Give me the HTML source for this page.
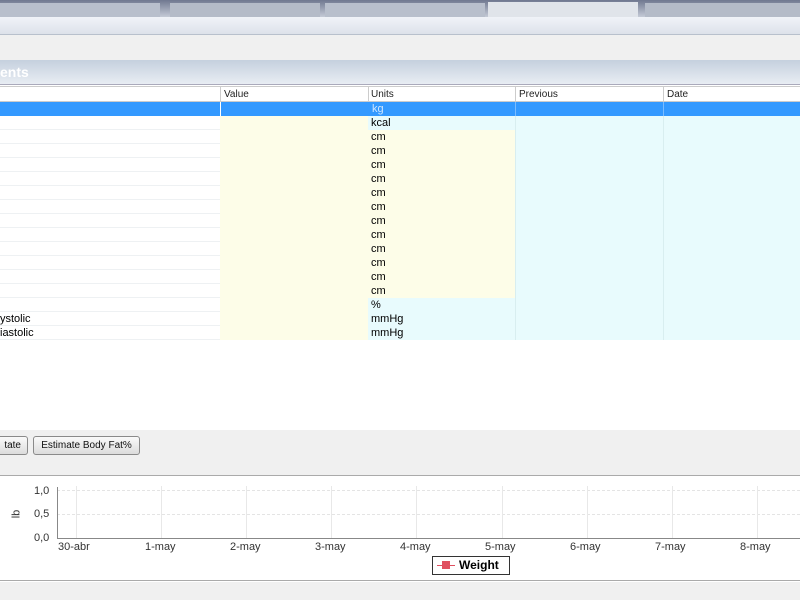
<!DOCTYPE html>
<html><head><style>
*{margin:0;padding:0;box-sizing:border-box}
body{width:800px;height:600px;overflow:hidden;background:#fff;font-family:"Liberation Sans",sans-serif;position:relative}
.a{position:absolute}
.row{position:absolute;left:0;width:800px;height:14px;border-bottom:1px solid #eef1f3;font-size:11px;line-height:14px}
.c{position:absolute;top:0;height:14px;padding-left:3px}
.hdr{font-family:"Liberation Sans Narrow","Liberation Sans",sans-serif;font-size:10px;color:#222}
.btn{position:absolute;top:436px;height:19px;border:1px solid #8a8a8a;border-radius:3px;background:linear-gradient(#fafafa,#dcdcdc);font-family:"Liberation Sans Narrow","Liberation Sans",sans-serif;font-size:10px;line-height:17px;padding:0 6px;color:#111;white-space:nowrap}
.xl{position:absolute;top:541px;font-size:11px;color:#333}
.vg{position:absolute;top:486px;width:1px;height:52px;background:#e8e8e8}
</style></head><body>
<div class="a" style="left:0;top:0;width:800px;height:17px;background:linear-gradient(#6f7890,#c4cad6)"></div>
<div class="a" style="left:0;top:3px;width:160px;height:14px;background:#b8bfcc"></div>
<div class="a" style="left:170px;top:3px;width:150px;height:14px;background:#b4bbc8"></div>
<div class="a" style="left:325px;top:3px;width:160px;height:14px;background:#b8bfcc"></div>
<div class="a" style="left:488px;top:2px;width:150px;height:15px;background:#e0e4ea"></div>
<div class="a" style="left:645px;top:3px;width:155px;height:14px;background:#b4bbc8"></div>
<div class="a" style="left:0;top:17px;width:800px;height:18px;background:linear-gradient(#f0f3f8,#dde2ea);border-bottom:1px solid #b8c0cc"></div>
<div class="a" style="left:0;top:35px;width:800px;height:25px;background:#f0f0f0"></div>
<div class="a" style="left:0;top:60px;width:800px;height:25px;background:linear-gradient(#c5d0de,#e8edf3);color:#fff;font-weight:bold;font-size:14px;line-height:24px;border-bottom:1px solid #aab">ents</div>
<div class="a" style="left:0;top:86px;width:800px;height:16px;background:#fff;border-bottom:1px solid #ccc;border-top:1px solid #ccc"></div>
<div class="a hdr" style="left:224px;top:89px">Value</div>
<div class="a hdr" style="left:371px;top:89px">Units</div>
<div class="a hdr" style="left:519px;top:89px">Previous</div>
<div class="a hdr" style="left:667px;top:89px">Date</div>
<div class="a" style="left:220px;top:86px;width:1px;height:16px;background:#ccc"></div>
<div class="a" style="left:368px;top:86px;width:1px;height:16px;background:#ccc"></div>
<div class="a" style="left:515px;top:86px;width:1px;height:16px;background:#ccc"></div>
<div class="a" style="left:663px;top:86px;width:1px;height:16px;background:#ccc"></div>
<div id="rows"></div>
<script>
var u=["kg","kcal","cm","cm","cm","cm","cm","cm","cm","cm","cm","cm","cm","cm","%","mmHg","mmHg"];
var n={15:"ystolic",16:"iastolic"};var h="";
for(var i=0;i<u.length;i++){var y=102+i*14;var sel=i==0;
var uc=u[i]=="cm"?"#fdfde8":"#e8fbfd";
if(sel){h+='<div class="row" style="top:'+y+'px;background:#3399ff;border-bottom:1px solid #3399ff"><div class="c" style="left:220px;width:1px;padding:0;background:#fff"></div><div class="c" style="left:369px;color:#cfe6ff">kg</div><div class="c" style="left:515px;width:1px;padding:0;background:#7bbcff"></div><div class="c" style="left:663px;width:1px;padding:0;background:#7bbcff"></div></div>';continue;}
h+='<div class="row" style="top:'+y+'px"><div class="c" style="left:0;width:220px;padding-left:0">'+(n[i]||"")+'</div><div class="c" style="left:220px;width:148px;background:#fdfde8"></div><div class="c" style="left:368px;width:147px;background:'+uc+'">'+u[i]+'</div><div class="c" style="left:515px;width:148px;background:#e8fbfd;border-left:1px solid #d8eef0"></div><div class="c" style="left:663px;width:137px;background:#e8fbfd;border-left:1px solid #d8eef0"></div></div>';}
document.getElementById("rows").innerHTML=h;
</script>
<div class="a" style="left:0;top:430px;width:800px;height:46px;background:#f0f0f0;border-bottom:1px solid #aaa"></div>
<div class="btn" style="left:-20px;width:48px;text-align:right">tate</div>
<div class="btn" style="left:33px;width:107px;text-align:center">Estimate Body Fat%</div>
<div class="a" style="left:0;top:477px;width:800px;height:104px;background:#fff;border-bottom:1px solid #aaa"></div>
<div class="a" style="left:0;top:582px;width:800px;height:18px;background:#f0f0f0"></div>
<div class="a" style="left:57px;top:490px;width:743px;height:0;border-top:1px dashed #e4e4e4"></div>
<div class="a" style="left:57px;top:514px;width:743px;height:0;border-top:1px dashed #e4e4e4"></div>
<div class="a" style="left:57px;top:487px;width:1px;height:52px;background:#888"></div>
<div class="a" style="left:57px;top:538px;width:743px;height:1px;background:#888"></div>
<div class="vg" style="left:76px"></div><div class="vg" style="left:161px"></div><div class="vg" style="left:246px"></div><div class="vg" style="left:331px"></div><div class="vg" style="left:416px"></div><div class="vg" style="left:502px"></div><div class="vg" style="left:587px"></div><div class="vg" style="left:672px"></div><div class="vg" style="left:757px"></div>
<div class="a" style="left:34px;top:485px;font-size:11px;color:#333">1,0</div>
<div class="a" style="left:34px;top:508px;font-size:11px;color:#333">0,5</div>
<div class="a" style="left:34px;top:532px;font-size:11px;color:#333">0,0</div>
<div class="a" style="left:12px;top:508px;font-size:11px;color:#333;transform:rotate(-90deg)">lb</div>
<div class="xl" style="left:58px">30-abr</div><div class="xl" style="left:145px">1-may</div><div class="xl" style="left:230px">2-may</div><div class="xl" style="left:315px">3-may</div><div class="xl" style="left:400px">4-may</div><div class="xl" style="left:485px">5-may</div><div class="xl" style="left:570px">6-may</div><div class="xl" style="left:655px">7-may</div><div class="xl" style="left:740px">8-may</div>
<div class="a" style="left:432px;top:556px;width:78px;height:19px;border:1px solid #333;background:#fff;font-size:12px;font-weight:bold;line-height:17px;padding-left:26px">Weight</div>
<div class="a" style="left:437px;top:565px;width:18px;height:1px;background:#e05060"></div>
<div class="a" style="left:442px;top:561px;width:8px;height:8px;background:#e05060"></div>
</body></html>
